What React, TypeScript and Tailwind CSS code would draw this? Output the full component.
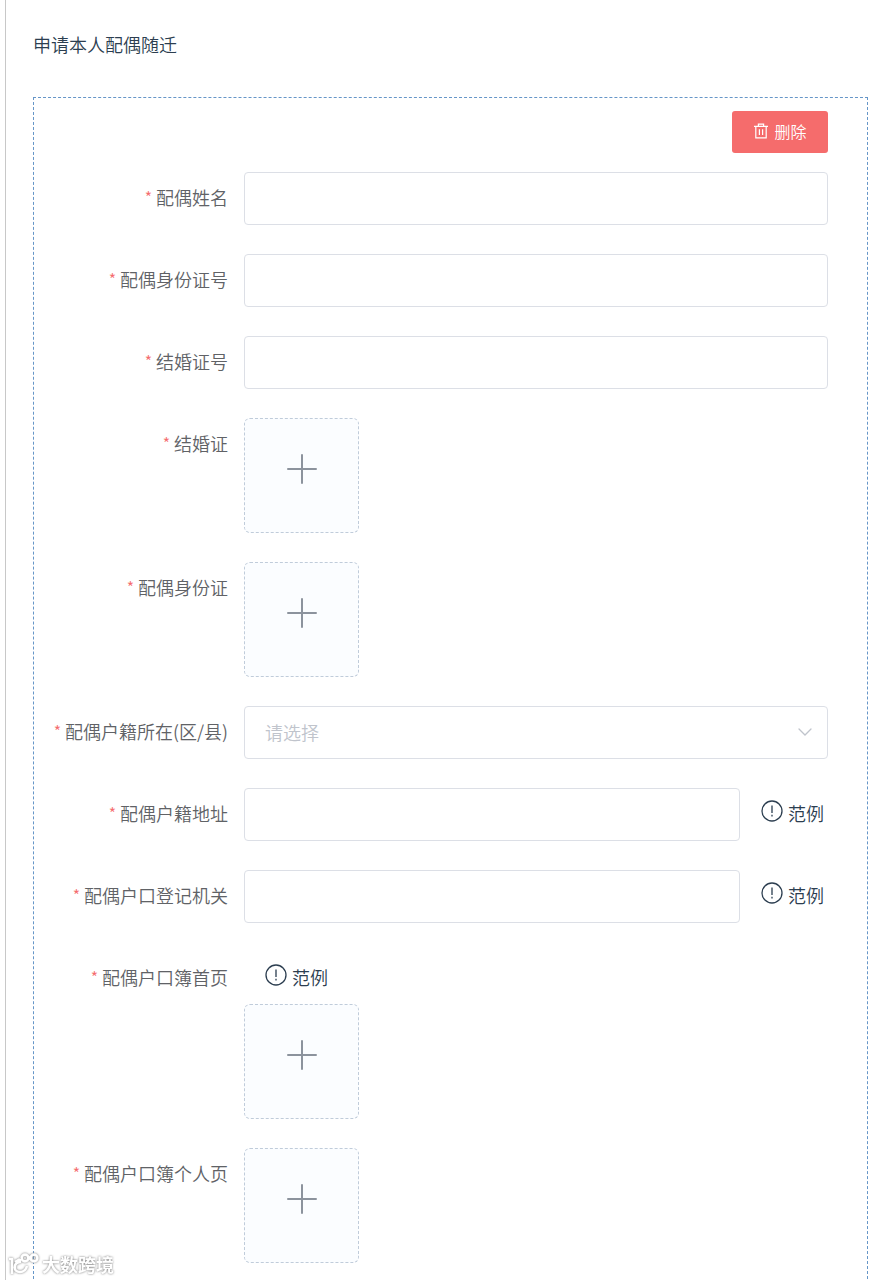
import * as React from "react";

interface FieldProps {
  id: string;
  label: string;
  children: React.ReactNode;
}

function Field({ id, label, children }: FieldProps) {
  return (
    <div className="flex items-start gap-4">
      <label
        htmlFor={id}
        className="flex h-[50px] w-[194px] shrink-0 items-center justify-end gap-1 text-[#606266]"
      >
        <span className="text-base text-[#f56c6c]">*</span>
        <span className="whitespace-nowrap">{label}</span>
      </label>
      {children}
    </div>
  );
}

function TextInput({ id }: { id: string }) {
  return (
    <input
      id={id}
      type="text"
      className="h-[53px] min-w-0 flex-1 rounded border border-[#dcdfe6] bg-white px-5 text-[#606266] outline-none focus:border-[#409eff]"
    />
  );
}

function UploadTile({ id }: { id: string }) {
  return (
    <label
      htmlFor={id}
      className="relative flex size-[115px] cursor-pointer items-center justify-center rounded-md border border-dashed border-[#c0ccda] bg-[#fbfdff] pb-[14px]"
    >
      <input id={id} type="file" accept="image/*" className="sr-only" />
      <svg
        viewBox="0 0 30 30"
        className="size-[30px]"
        fill="none"
        stroke="#8c939d"
        strokeWidth="2"
        strokeLinecap="round"
        aria-hidden="true"
      >
        <path d="M15 1v28M1 15h28" />
      </svg>
    </label>
  );
}

function ExampleLink() {
  return (
    <a
      href="#example"
      className="flex h-[50px] shrink-0 items-center gap-[5px] pl-[21px] pr-1 text-[#2c3e50]"
    >
      <svg
        viewBox="0 0 22 22"
        className="-mt-1 size-[22px]"
        fill="none"
        stroke="currentColor"
        strokeWidth="1.3"
        aria-hidden="true"
      >
        <circle cx="11" cy="11" r="10" />
        <path d="M11 5.5v7.5M11 14.8v1.8" />
      </svg>
      <span>范例</span>
    </a>
  );
}

function TrashIcon() {
  return (
    <svg
      viewBox="0 0 16 16"
      className="size-4"
      fill="none"
      stroke="currentColor"
      strokeWidth="1.2"
      aria-hidden="true"
    >
      <path d="M1 3.4h14M5.4 3.4V1.2h5.2v2.2M2.8 3.4v11.4h10.4V3.4M6.4 6.2v5.8M9.6 6.2v5.8" />
    </svg>
  );
}

function Watermark() {
  return (
    <div className="pointer-events-none absolute bottom-1 left-2 flex items-center gap-[2px] text-white drop-shadow-[0_0_1px_#777777]">
      <svg
        viewBox="0 0 32 24"
        className="h-6 w-8"
        fill="none"
        stroke="currentColor"
        strokeWidth="2.6"
        strokeLinejoin="round"
        aria-hidden="true"
      >
        <path d="M1 7h3v15M12 7v3c-7 1-7 10 0 10 4 0 6-2 7-6M7 10l5-3" />
        <circle cx="17" cy="6" r="3.4" />
        <circle cx="26" cy="6" r="3.4" />
        <path d="M20 4l3 4" />
      </svg>
      <span className="font-bold leading-6">大数跨境</span>
    </div>
  );
}

export default function App() {
  return (
    <div className="relative min-h-screen overflow-hidden bg-white pl-[5px] font-['Noto_Sans_CJK_SC',sans-serif] text-lg font-[350] text-[#2c3e50]">
      <main className="min-h-screen border-l border-[#c8c8c8] pl-[27px] pr-[5px]">
        <h1 className="pb-[39px] pt-[30px] leading-7">申请本人配偶随迁</h1>
        <form className="border border-b-0 border-dashed border-[#6696c8] pb-4 pr-[39px] pt-[13px]">
          <div className="mb-[19px] flex justify-end">
            <button
              type="button"
              className="flex h-[42px] w-24 items-center justify-center gap-[5px] rounded-[3px] bg-[#f56c6c] pb-[2px] text-base text-white"
            >
              <TrashIcon />
              <span>删除</span>
            </button>
          </div>

          <div className="flex flex-col gap-[29px]">
            <Field id="spouse-name" label="配偶姓名">
              <TextInput id="spouse-name" />
            </Field>
            <Field id="spouse-id-number" label="配偶身份证号">
              <TextInput id="spouse-id-number" />
            </Field>
            <Field id="marriage-number" label="结婚证号">
              <TextInput id="marriage-number" />
            </Field>
            <Field id="marriage-certificate" label="结婚证">
              <UploadTile id="marriage-certificate" />
            </Field>
            <Field id="spouse-id-card" label="配偶身份证">
              <UploadTile id="spouse-id-card" />
            </Field>
            <Field id="spouse-district" label="配偶户籍所在(区/县)">
              <div className="relative flex-1">
                <select
                  id="spouse-district"
                  defaultValue=""
                  className="block h-[53px] w-full appearance-none rounded border border-[#dcdfe6] bg-white px-5 pb-[2px] text-[#c0c4cc] outline-none focus:border-[#409eff]"
                >
                  <option value="">请选择</option>
                </select>
                <svg
                  viewBox="0 0 14 8"
                  className="pointer-events-none absolute right-4 top-[22px] h-2 w-[14px]"
                  fill="none"
                  stroke="#c0c4cc"
                  strokeWidth="1.3"
                  strokeLinecap="round"
                  aria-hidden="true"
                >
                  <path d="M1 1l6 6 6-6" />
                </svg>
              </div>
            </Field>
            <Field id="spouse-address" label="配偶户籍地址">
              <div className="flex flex-1">
                <TextInput id="spouse-address" />
                <ExampleLink />
              </div>
            </Field>
            <Field id="spouse-registry" label="配偶户口登记机关">
              <div className="flex flex-1">
                <TextInput id="spouse-registry" />
                <ExampleLink />
              </div>
            </Field>
            <Field id="spouse-booklet-cover" label="配偶户口簿首页">
              <div className="flex flex-col items-start gap-[2px]">
                <ExampleLink />
                <UploadTile id="spouse-booklet-cover" />
              </div>
            </Field>
            <Field id="spouse-booklet-page" label="配偶户口簿个人页">
              <UploadTile id="spouse-booklet-page" />
            </Field>
          </div>
        </form>
      </main>
      <Watermark />
    </div>
  );
}
